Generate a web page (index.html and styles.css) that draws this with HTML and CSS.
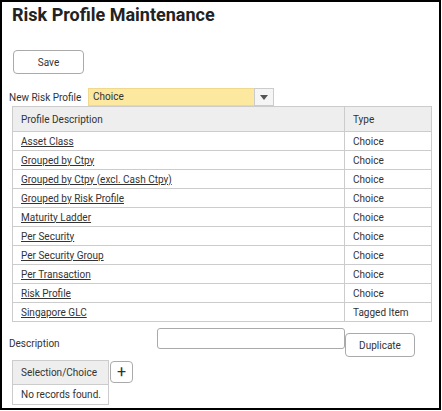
FILE: index.html
```html
<!DOCTYPE html>
<html>
<head>
<meta charset="utf-8">
<link rel="stylesheet" href="styles.css">
</head>
<body>
<div class="frame">
  <h1 class="title">Risk Profile Maintenance</h1>
  <div class="toolbar"><button class="btn btn-save">Save</button></div>
  <div class="new-row">
    <span class="label">New Risk Profile</span>
    <div class="select">
      <span class="select-value">Choice</span>
      <span class="select-arrow"><svg width="8" height="5" viewBox="0 0 8 5"><path d="M0 0h8L4 5z" fill="#555"/></svg></span>
    </div>
  </div>
  <table class="grid">
    <thead>
      <tr><th class="c-desc">Profile Description</th><th class="c-type">Type</th></tr>
    </thead>
    <tbody>
      <tr><td><a href="#">Asset Class</a></td><td>Choice</td></tr>
      <tr><td><a href="#">Grouped by Ctpy</a></td><td>Choice</td></tr>
      <tr><td><a href="#">Grouped by Ctpy (excl. Cash Ctpy)</a></td><td>Choice</td></tr>
      <tr><td><a href="#">Grouped by Risk Profile</a></td><td>Choice</td></tr>
      <tr><td><a href="#">Maturity Ladder</a></td><td>Choice</td></tr>
      <tr><td><a href="#">Per Security</a></td><td>Choice</td></tr>
      <tr><td><a href="#">Per Security Group</a></td><td>Choice</td></tr>
      <tr><td><a href="#">Per Transaction</a></td><td>Choice</td></tr>
      <tr><td><a href="#">Risk Profile</a></td><td>Choice</td></tr>
      <tr><td><a href="#">Singapore GLC</a></td><td>Tagged Item</td></tr>
    </tbody>
  </table>
  <div class="desc-row">
    <span class="label desc-label">Description</span>
    <input class="text-input" type="text">
    <button class="btn btn-dup">Duplicate</button>
  </div>
  <div class="sel-row">
    <table class="grid small">
      <thead><tr><th>Selection/Choice</th></tr></thead>
      <tbody><tr><td>No records found.</td></tr></tbody>
    </table>
    <button class="btn btn-plus">+</button>
  </div>
</div>
</body>
</html>
```
FILE: styles.css
```css
* { box-sizing: border-box; }
html, body { margin: 0; padding: 0; background: #fff; }
body { font-family: Roboto, "Liberation Sans", sans-serif; color: #333; font-size: 10px; }
.frame {
  width: 441px;
  height: 410px;
  border: 2px solid #000;
  padding: 0 0 0 7px;
  overflow: hidden;
}
.title {
  margin: 0;
  padding: 2px 0 0 3px;
  font-size: 18px;
  font-weight: 700;
  color: #222;
  line-height: 22px;
}
.toolbar { padding: 24px 0 0 4px; }
.btn {
  font-family: Roboto, "Liberation Sans", sans-serif;
  background: #fff;
  border: 1px solid #aaa;
  border-radius: 4px;
  color: #333;
  font-size: 10px;
  padding: 0;
  display: block;
}
.btn-save { width: 71px; height: 24px; }
.new-row { display: flex; align-items: center; margin-top: 14px; height: 18px; }
.label { font-size: 10px; color: #333; }
.new-row .label { width: 79px; }
.select { display: flex; height: 18px; }
.select-value {
  width: 166px;
  background: #fde8a0;
  border: 1px solid #f0d98c;
  border-right: none;
  padding-left: 4px;
  line-height: 16px;
  font-size: 10px;
}
.select-arrow {
  width: 20px;
  border: 1px solid #ccc;
  background: #f5f5f5;
  display: flex;
  align-items: center;
  justify-content: center;
}
.grid { border-collapse: collapse; margin-left: 3px; }
.grid th, .grid td {
  border: 1px solid #ccc;
  text-align: left;
  padding: 0 0 0 8px;
  font-weight: 400;
  font-size: 10px;
  color: #333;
}
.grid th { background: #eee; height: 25px; }
.grid td { height: 19px; }
.grid a { color: #333; text-decoration: underline; }
.grid .c-desc { width: 332px; }
.grid .c-type { width: 87px; }
.desc-row { display: flex; align-items: flex-start; margin-top: 6px; height: 31px; }
.desc-label { width: 148px; margin-top: 10px; }
.text-input {
  width: 188px;
  height: 21px;
  border: 1px solid #aaa;
  border-radius: 3px;
  margin: 0;
}
.btn-dup { width: 70px; height: 24px; margin-top: 5px; margin-left: 0px; }
.sel-row { display: flex; align-items: flex-start; margin-top: 1px; }
.grid.small th { height: 24px; width: 96px; }
.grid.small td { height: 20px; }
.btn-plus { width: 23px; height: 22px; font-size: 16px; margin-top: 1px; margin-left: 1px; line-height: 18px; }
```
